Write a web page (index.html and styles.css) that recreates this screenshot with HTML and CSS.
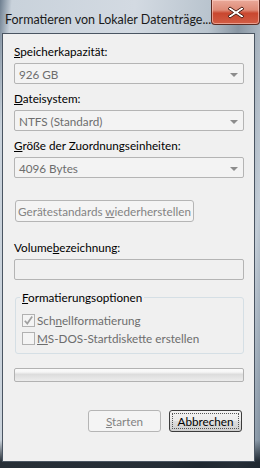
FILE: index.html
```html
<!DOCTYPE html>
<html>
<head>
  <title>Formatieren von Lokaler Datenträger</title>
  <link rel="stylesheet" href="styles.css">
</head>
<body>

  <div class="window">
    <div class="titlebar">
      <div class="title">Formatieren von Lokaler Datenträge...</div>
      <div class="close">
        <svg width="18" height="13" viewBox="0 0 18 13">
          <path d="M3 1 L9 5 L15 1 L17 2.8 L11.5 6.5 L17 10.2 L15 12 L9 8 L3 12 L1 10.2 L6.5 6.5 L1 2.8 Z" fill="#fff" stroke="#4a1d14" stroke-width="1" stroke-linejoin="round"/>
        </svg>
      </div>
    </div>

    <div class="client">
      <div class="label"><u>S</u>peicherkapazität:</div>
      <div class="combo"><span>926 GB</span><i class="arrow"></i></div>

      <div class="label"><u>D</u>ateisystem:</div>
      <div class="combo"><span>NTFS (Standard)</span><i class="arrow"></i></div>

      <div class="label"><u>G</u>röße der Zuordnungseinheiten:</div>
      <div class="combo"><span>4096 Bytes</span><i class="arrow"></i></div>

      <div class="btn btn-wide disabled"><span>Gerätestandards <u>w</u>iederherstellen</span></div>

      <div class="label label-vol">Volume<u>b</u>ezeichnung:</div>
      <div class="textbox"></div>

      <fieldset class="group">
        <legend><u>F</u>ormatierungsoptionen</legend>
        <div class="check">
          <span class="box">
            <svg width="11" height="11" viewBox="0 0 11 11"><path d="M1.8 5.8 L4.3 8.6 L9.2 1.6" fill="none" stroke="#a0a0a0" stroke-width="1.7"/></svg>
          </span>
          <span class="check-text">Sch<u>n</u>ellformatierung</span>
        </div>
        <div class="check">
          <span class="box"></span>
          <span class="check-text"><u>M</u>S-DOS-Startdiskette erstellen</span>
        </div>
      </fieldset>

      <div class="progress"></div>

      <div class="buttons">
        <div class="btn disabled"><span><u>S</u>tarten</span></div>
        <div class="btn default"><span class="focus">Abbrechen</span></div>
      </div>
    </div>
  </div>

</body>
</html>
```

FILE: styles.css
```css
body {
  margin: 0;
  font-family: Lato, "Noto Sans", sans-serif;
  font-size: 11.7px;
}
.window {
  width: 260px;
  height: 468px;
  box-sizing: border-box;
  padding: 0 5px 6px 2px;
  display: flex;
  flex-direction: column;
  background:
    linear-gradient(180deg, rgba(255,255,255,0) 440px, rgba(20,28,36,0.9) 462px),
    linear-gradient(95deg, #6e7f90 0%, #c9d2db 4%, #d3dae2 45%, #b9c4ce 70%, #8895a2 80%, #c2ccd6 92%, #7a8a9a 100%);
}
.titlebar {
  height: 33px;
  display: flex;
  align-items: flex-start;
  flex-shrink: 0;
}
.title {
  padding: 12px 0 0 3px;
  font-size: 12.5px;
  line-height: 15px;
  color: #1a1a1a;
  white-space: nowrap;
}
.close {
  flex-shrink: 0;
  margin-left: auto;
  width: 49px;
  height: 25px;
  margin-right: -2px;
  border: 1px solid #5e2a20;
  border-top: none;
  border-radius: 0 0 4px 4px;
  background: linear-gradient(180deg, #eaa999 0%, #de8a76 42%, #c9472f 55%, #d25d45 100%);
  box-shadow: inset 0 0 0 1px rgba(255,215,205,0.55);
  display: flex;
  align-items: center;
  justify-content: center;
  box-sizing: border-box;
}
.client {
  flex: 1;
  background: #f0f0f0;
  border: 1px solid #4a5562;
  padding: 3px 10px 0 11px;
  display: flex;
  flex-direction: column;
}
.label {
  height: 15px;
  line-height: 15px;
  margin: 7px 0 4px 0;
  color: #000;
}
.combo, .textbox {
  height: 21px;
  box-sizing: border-box;
  border: 1px solid #b4b4b4;
  border-radius: 2px;
  background: #f3f3f3;
  display: flex;
  align-items: center;
  justify-content: space-between;
  padding: 0 5px 0 4px;
  color: #6d6d6d;
  flex-shrink: 0;
}
.arrow {
  width: 0;
  height: 0;
  border-left: 4px solid transparent;
  border-right: 4px solid transparent;
  border-top: 4px solid #8c8c8c;
  margin-top: 2px;
}
.btn {
  height: 22px;
  box-sizing: border-box;
  border: 1px solid #707070;
  border-radius: 3px;
  display: flex;
  align-items: center;
  justify-content: center;
  background: linear-gradient(180deg, #f2f2f2 0%, #ebebeb 48%, #dddddd 52%, #cfcfcf 100%);
  color: #000;
  white-space: nowrap;
  flex-shrink: 0;
}
.btn.disabled {
  border-color: #b5b5b5;
  background: #f4f4f4;
  color: #838383;
}
.btn-wide {
  width: 179px;
  margin: 22px 0 0 1px;
}
.label-vol {
  margin-top: 18px;
}
.textbox {
  background: #f0f0f0;
}
.group {
  margin: 10px 0 0 1px;
  padding: 7px 0 0 6px;
  border: 1px solid #d5dfe5;
  border-radius: 3px;
  height: 64px;
  box-sizing: border-box;
  flex-shrink: 0;
}
.group legend {
  padding: 0 2px;
  margin-left: -2px;
  line-height: 14px;
}
.check {
  display: flex;
  align-items: center;
  height: 18px;
  color: #6d6d6d;
}
.box {
  width: 13px;
  height: 13px;
  box-sizing: border-box;
  border: 1px solid #b1b1b1;
  background: #f4f4f4;
  margin-right: 2px;
  display: flex;
  align-items: center;
  justify-content: center;
}
.progress {
  margin-top: 14px;
  height: 14px;
  border: 1px solid #b2b2b2;
  border-radius: 2px;
  background: linear-gradient(180deg, #fbfbfb 0%, #f6f6f6 25%, #dcdcdc 45%, #e4e4e4 70%, #ececec 100%);
  box-sizing: border-box;
  flex-shrink: 0;
}
.buttons {
  display: flex;
  justify-content: flex-end;
  gap: 8px;
  margin-top: 28px;
  padding-right: 2px;
}
.buttons .btn {
  width: 73px;
}
.btn.default {
  border-color: #3c3c3c;
  padding: 2px;
}
.focus {
  flex: 1;
  align-self: stretch;
  border: 1px dotted #555;
  display: flex;
  align-items: center;
  justify-content: center;
}
```
